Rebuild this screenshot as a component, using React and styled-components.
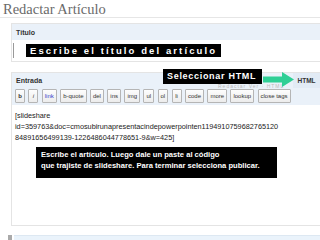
import React from 'react';
import styled, { createGlobalStyle } from 'styled-components';

const GlobalStyle = createGlobalStyle`
    html, body {
        margin: 0;
        padding: 0;
        background: #fff;
    }
    body {
        width: 320px;
        height: 240px;
        overflow: hidden;
        font-family: "Liberation Sans", Arial, sans-serif;
    }
`;

const Page = styled.div`
    width: 320px;
    height: 240px;
    display: flex;
    flex-direction: column;
    overflow: hidden;
`;

const PageTitle = styled.h1`
    margin: 0;
    height: 17px;
    padding: 1px 0 0 3px;
    font-family: "Liberation Serif", "Times New Roman", serif;
    font-weight: normal;
    font-size: 14.5px;
    line-height: 16px;
    color: #6a6a6a;
    border-bottom: 1px solid #e6e6e6;
`;

const Panel = styled.div`
    margin: ${(p) => p.$top}px 0 0 11px;
    border: 1px solid #e4e4e4;
    border-right: none;
    position: relative;
`;

const PanelHeader = styled.div`
    height: 16px;
    background: #eaf1f9;
    display: flex;
    align-items: center;
    padding-left: 4px;
    font-size: 7px;
    font-weight: bold;
    color: #333;
`;

const FieldRow = styled.div`
    height: 21px;
    display: flex;
    align-items: center;
    padding-left: 1px;
`;

const InputBox = styled.div`
    flex: 1;
    height: 15px;
    display: flex;
    align-items: center;
    border-left: 1px solid #999;
    padding-left: 12px;
`;

const BlackLabel = styled.div`
    background: #000;
    color: #fff;
    font-weight: bold;
    font-size: ${(p) => p.$size || 9}px;
    letter-spacing: ${(p) => p.$ls || 0}px;
    line-height: ${(p) => p.$lh || 13}px;
    padding: ${(p) => p.$pad || '0 4px'};
    white-space: nowrap;
`;

const EntradaHead = styled.div`
    height: 15px;
    background: #eaf1f9;
    display: flex;
    align-items: center;
    justify-content: space-between;
    font-size: 7px;
    font-weight: bold;
    color: #333;
    padding-left: 4px;
`;

const FaintTabs = styled.span`
    position: absolute;
    left: 206px;
    top: 10px;
    font-size: 5px;
    color: #bbb;
    font-weight: normal;
    letter-spacing: 1px;
`;

const Overlay = styled.div`
    position: absolute;
    left: ${(p) => p.$x}px;
    top: ${(p) => p.$y}px;
`;

const HtmlTab = styled.div`
    height: 15px;
    width: 27px;
    display: flex;
    align-items: center;
    justify-content: center;
    background: #e2ebf5;
    font-size: 6.5px;
    font-weight: bold;
    color: #333;
`;

const Toolbar = styled.div`
    display: flex;
    gap: 3.4px;
    padding: 1px 0 2px 3px;
    background: #eaf1f9;
    overflow: hidden;
`;

const ToolButton = styled.span`
    flex-shrink: 0;
    height: 12px;
    padding: 0 2px;
    min-width: 4px;
    display: flex;
    align-items: center;
    justify-content: center;
    border: 1px solid #b5b5b5;
    border-radius: 1px;
    background: linear-gradient(#fdfdfd, #ececec);
    font-size: 6px;
    white-space: nowrap;
    color: ${(p) => (p.$link ? '#3344cc' : '#333')};
    font-weight: ${(p) => (p.$bold ? 'bold' : 'normal')};
    font-style: ${(p) => (p.$italic ? 'italic' : 'normal')};
`;

const Editor = styled.div`
    height: 120px;
    padding: 5px 0 0 3px;
    background: #fff;
    box-sizing: border-box;
    font-size: 7.3px;
    line-height: 11px;
    color: #222;
`;

const Code = styled.div`
    white-space: nowrap;
`;

const Note = styled.div`
    margin: 4px 0 0 21px;
    width: 241px;
    height: 31px;
    box-sizing: border-box;
    background: #000;
    color: #fff;
    font-weight: bold;
    font-size: 7.6px;
    line-height: 10.5px;
    padding: 3px 0 0 5px;
    white-space: nowrap;
`;

const BottomBar = styled.div`
    margin-top: 9px;
    display: flex;
    gap: 2px;
    padding-left: 8px;
    height: 8px;
`;

const Handle = styled.div`
    width: 4px;
    height: 6px;
    background: #aaa;
`;

const BottomBand = styled.div`
    flex: 1;
    background: #eaf3fb;
    border-top: 1px solid #dde8f2;
`;

const buttons = [
    { t: 'b', bold: true },
    { t: 'i', italic: true },
    { t: 'link', link: true },
    { t: 'b-quote' },
    { t: 'del' },
    { t: 'ins' },
    { t: 'img' },
    { t: 'ul' },
    { t: 'ol' },
    { t: 'li' },
    { t: 'code' },
    { t: 'more' },
    { t: 'lookup' },
    { t: 'close tags' },
];

const Arrow = () => (
    <svg width="31" height="15" viewBox="0 0 31 15">
        <path d="M0 4.5 H19 V0 L31 7.5 L19 15 V10.5 H0 Z" fill="#2fcf95" />
    </svg>
);

const App = () => (
    <Page>
        <GlobalStyle />
        <PageTitle>Redactar Artículo</PageTitle>

        <Panel $top={5}>
            <PanelHeader>Título</PanelHeader>
            <FieldRow>
                <InputBox>
                    <BlackLabel $size={9.5} $ls={2.1}>Escribe el título del artículo</BlackLabel>
                </InputBox>
            </FieldRow>
        </Panel>

        <Panel $top={10}>
            <EntradaHead>
                <span>Entrada</span>
                <HtmlTab>HTML</HtmlTab>
            </EntradaHead>
            <FaintTabs>Redactar Ver · HTML</FaintTabs>
            <Overlay $x={151} $y={-4}>
                <BlackLabel $ls={0.7} $lh={15} $pad="0 6px 0 4px">Seleccionar HTML</BlackLabel>
            </Overlay>
            <Overlay $x={251} $y={-1}>
                <Arrow />
            </Overlay>
            <Toolbar>
                {buttons.map((b) => (
                    <ToolButton key={b.t} $bold={b.bold} $italic={b.italic} $link={b.link}>
                        {b.t}
                    </ToolButton>
                ))}
            </Toolbar>
            <Editor>
                <Code>[slideshare</Code>
                <Code>id=359763&amp;doc=cmosubirunapresentacindepowerpointen1194910759682765120</Code>
                <Code>84891656499139-1226486044778651-9&amp;w=425]</Code>
                <Note>
                    Escribe el artículo. Luego dale un paste al código
                    <br />
                    que trajiste de slideshare. Para terminar selecciona publicar.
                </Note>
            </Editor>
        </Panel>

        <BottomBar>
            <Handle />
            <BottomBand />
        </BottomBar>
    </Page>
);

export default App;
